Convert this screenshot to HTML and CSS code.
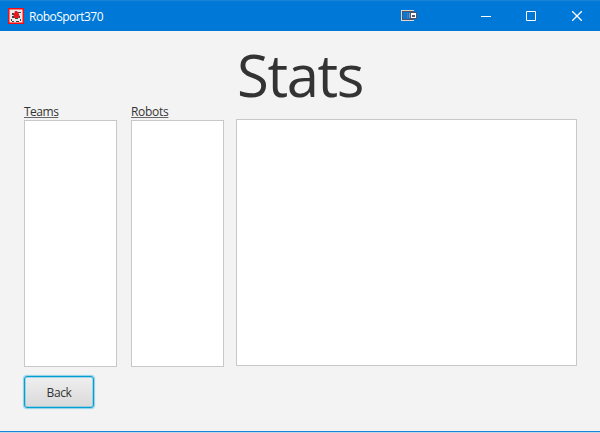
FILE: index.html
```html
<!DOCTYPE html>
<html lang="en">
<head>
<meta charset="utf-8">
<title>RoboSport370</title>
<link rel="stylesheet" href="styles.css">
</head>
<body>
<div class="window">
  <header class="titlebar">
    <svg class="app-icon" width="16" height="16" viewBox="0 0 16 16">
      <path fill="#fb0a10" d="M0 0h16v16H0z"/>
      <path fill="#e9eaea" d="M1.500 1.500h13v13h-13z"/>
      <path fill="#444" d="M9 4h4v1H9zM4 5h2v2H4zM3 11h1v2H3zM12 11h1v2h-1zM4 13h2v1H4zM8 13h3v1H8z"/>
      <path fill="#e8181e" d="M7 3h2l2 3 1 4H5l1-4z"/>
      <path fill="#444" d="M4 8h2v2H4zM11 8h1v2h-1zM7 10h3v1H7z"/>
    </svg>
    <span class="app-name">RoboSport370</span>
    <svg class="mirror" width="16" height="12" viewBox="0 0 16 12" shape-rendering="crispEdges">
      <path fill="#ddd8d3" d="M0 0h13v11H0z"/>
      <path fill="#505468" d="M1 1h12v9H1z"/>
      <path fill="#0878d4" d="M2 2h10v7H2z"/>
      <path fill="#55799f" d="M6 3h1v5H6z"/>
      <path fill="#7d9abb" d="M8 3h1v5H8z"/>
      <path fill="#505468" d="M9 2h7v7H9z"/>
      <path fill="#fff" d="M10 3h5v5h-5z"/>
      <path fill="#505468" d="M11 5h3v2h-3z"/>
    </svg>
    <svg class="control" width="10" height="10" viewBox="0 0 10 10"><path d="M0 5.500h10"/></svg>
    <svg class="control" width="10" height="10" viewBox="0 0 10 10"><path d="M.5.5h9v9h-9z"/></svg>
    <svg class="control" width="10" height="10" viewBox="0 0 10 10"><path class="cross" d="M0 0l10 10M10 0L0 10"/></svg>
  </header>
  <main class="content">
    <section class="lists">
      <div class="column"><h2 class="label teams">Teams</h2><div class="list"></div></div>
      <div class="column"><h2 class="label robots">Robots</h2><div class="list"></div></div>
    </section>
    <section class="stats"><h1 class="heading">Stats</h1><div class="panel"></div></section>
    <button class="back">Back</button>
  </main>
</div>
</body>
</html>
```
FILE: styles.css
```css
* { box-sizing: border-box; }
body {
  margin: 0;
  font: 12px "Open Sans", "Noto Sans", sans-serif;
  color: #333;
  overflow: hidden;
}
.window {
  width: 600px;
  height: 433px;
  display: flex;
  flex-direction: column;
  background: #f3f3f3;
  border-bottom: 1px solid #c3d5e3;
}
.titlebar {
  height: 31px;
  flex: none;
  display: flex;
  align-items: center;
  padding: 0 18px 0 8px;
  background: #0078d7;
  border-top: 1px solid #1883d7;
  color: #fff;
}
.app-name { margin-left: 5px; letter-spacing: -0.5px; }
.mirror { margin-left: auto; margin-right: 64px; }
.control { fill: none; stroke: #fff; stroke-width: 1; }
.cross { stroke-width: 1.3; }
.control + .control { margin-left: 35px; }
.control:last-child { margin-left: 36px; }
.content {
  flex: 1;
  display: grid;
  grid-template-columns: 200px 341px;
  grid-template-rows: 336px 32px;
  column-gap: 12px;
  row-gap: 9px;
  padding-left: 24px;
  border-bottom: 1px solid #1883d7;
}
.lists {
  display: grid;
  grid-template-columns: 93px 93px;
  column-gap: 14px;
  padding-top: 71px;
}
.column { display: flex; flex-direction: column; }
.label {
  height: 18px;
  flex: none;
  align-self: flex-start;
  margin: 0;
  font-size: 12px;
  font-weight: 400;
  line-height: 19px;
  text-decoration: underline #666 1px;
  text-underline-offset: 1px;
  text-decoration-skip-ink: none;
}
.list { flex: 1; background: #fff; border: 1px solid #c8c8c8; }
.teams { letter-spacing: -0.5px; }
.robots { letter-spacing: -0.3px; }
.heading {
  height: 88px;
  margin: 0;
  padding-left: 1px;
  font-size: 58px;
  font-weight: 400;
  line-height: 87px;
  letter-spacing: -1.4px;
}
.panel { height: 247px; background: #fff; border: 1px solid #c8c8c8; }
.back {
  width: 70px;
  height: 32px;
  padding: 0;
  border: 1px solid #039ed3;
  border-radius: 3px;
  box-shadow: 0 0 1px 1px #8fd0e6, inset 0 0 0 0.5px #5fbfdf;
  background: linear-gradient(#efefef, #d9d9d9);
  color: #333;
  font: inherit;
  letter-spacing: -0.4px;
}
```
